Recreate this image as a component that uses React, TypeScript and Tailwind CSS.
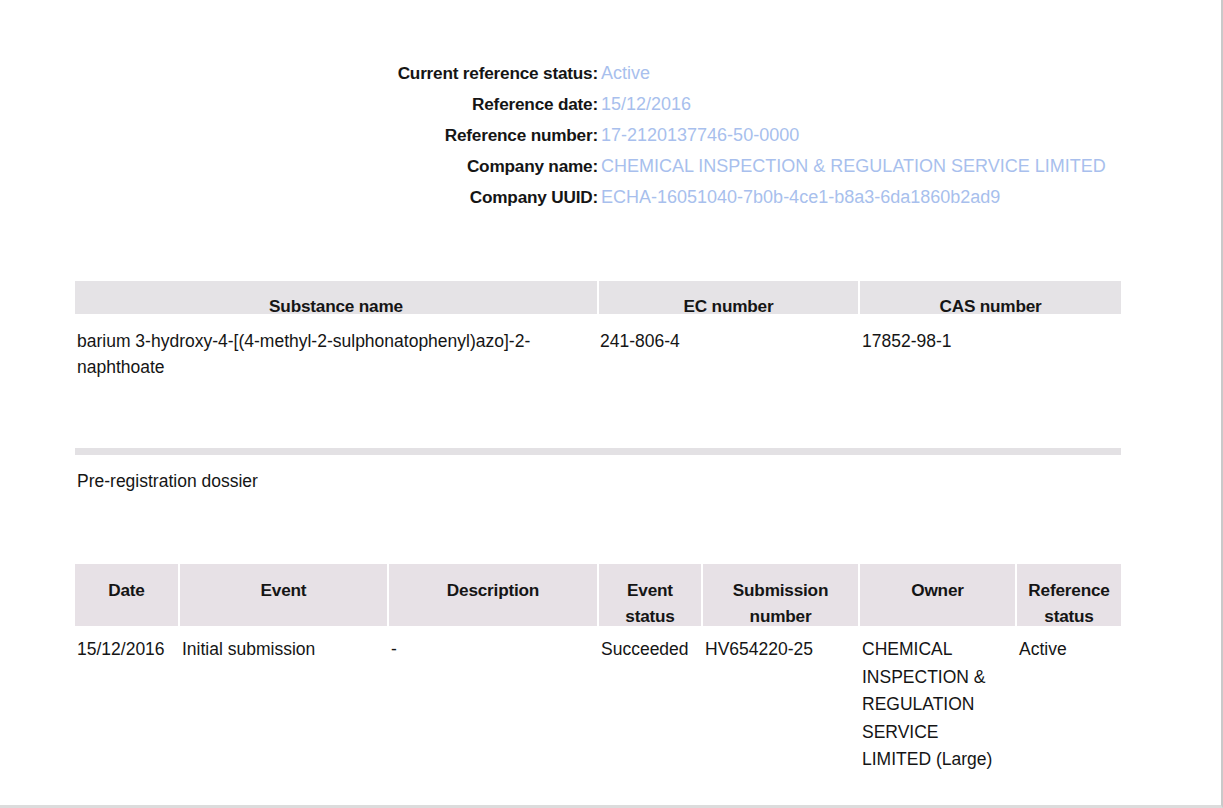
const info: [string, string][] = [
  ['Current reference status:', 'Active'],
  ['Reference date:', '15/12/2016'],
  ['Reference number:', '17-2120137746-50-0000'],
  ['Company name:', 'CHEMICAL INSPECTION & REGULATION SERVICE LIMITED'],
  ['Company UUID:', 'ECHA-16051040-7b0b-4ce1-b8a3-6da1860b2ad9'],
];

const events = [
  { head: ['Date'], w: 'w-[103px]' },
  { head: ['Event'], w: 'w-[207px]' },
  { head: ['Description'], w: 'w-[208px]' },
  { head: ['Event', 'status'], w: 'w-[102px]' },
  { head: ['Submission', 'number'], w: 'w-[155px]' },
  { head: ['Owner'], w: 'w-[155px]' },
  { head: ['Reference', 'status'], w: 'w-[104px]' },
];

const eventRow: string[][] = [
  ['15/12/2016'],
  ['Initial submission'],
  ['-'],
  ['Succeeded'],
  ['HV654220-25'],
  ['CHEMICAL', 'INSPECTION &', 'REGULATION', 'SERVICE', 'LIMITED (Large)'],
  ['Active'],
];

export default function App() {
  return (
    <div className="w-[1223px] h-[808px] overflow-hidden bg-white border-r-2 border-r-[#c9c9c9] border-b-[3px] border-b-[#dcdcdc] text-[#151515] font-['Liberation_Sans',Arial,sans-serif]">
      {/* reference summary */}
      <div className="pt-[58px] grid grid-cols-[598px_1fr] leading-[31px]">
        {info.map(([k, v]) => (
          <div key={k} className="contents">
            <div className="text-right font-bold text-[17.2px] tracking-[-0.2px]">{k}</div>
            <div className="pl-[3px] text-[18px] text-[#a8bfed]">{v}</div>
          </div>
        ))}
      </div>

      {/* substance table */}
      <div className="ml-[75px] w-[1046px] mt-[68px]">
        <div className="grid grid-cols-[522px_259px_261px] gap-x-[2px]">
          {['Substance name', 'EC number', 'CAS number'].map((h) => (
            <div key={h} className="h-[33px] pt-[16px] bg-[#e5e3e6] text-center font-bold text-[17.2px] leading-[18px] tracking-[-0.2px]">{h}</div>
          ))}
          <div className="pt-[14px] pl-[2px] text-[17.5px] leading-[26px]">barium 3-hydroxy-4-[(4-methyl-2-sulphonatophenyl)azo]-2-naphthoate</div>
          <div className="pt-[14px] pl-[1px] text-[17.5px] leading-[26px]">241-806-4</div>
          <div className="pt-[14px] pl-[2px] text-[17.5px] leading-[26px]">17852-98-1</div>
        </div>

        <div className="mt-[68px] h-[7px] bg-[#e3e1e4]" />

        <div className="mt-[13px] pl-[2px] text-[17.5px] leading-[26px]">Pre-registration dossier</div>

        {/* event history */}
        <div className="mt-[70px] flex gap-x-[2px]">
          {events.map((c, i) => (
            <div key={i} className={c.w}>
              <div className="h-[62px] pt-[13px] bg-[#e7e1e6] text-center font-bold text-[17.2px] leading-[26px] tracking-[-0.2px]">
                {c.head.map((l) => (
                  <div key={l}>{l}</div>
                ))}
              </div>
              <div className="pt-[10px] pl-[2px] text-[17.5px] leading-[27.5px] whitespace-nowrap">
                {eventRow[i].map((l) => (
                  <div key={l}>{l}</div>
                ))}
              </div>
            </div>
          ))}
        </div>
      </div>
    </div>
  );
}
